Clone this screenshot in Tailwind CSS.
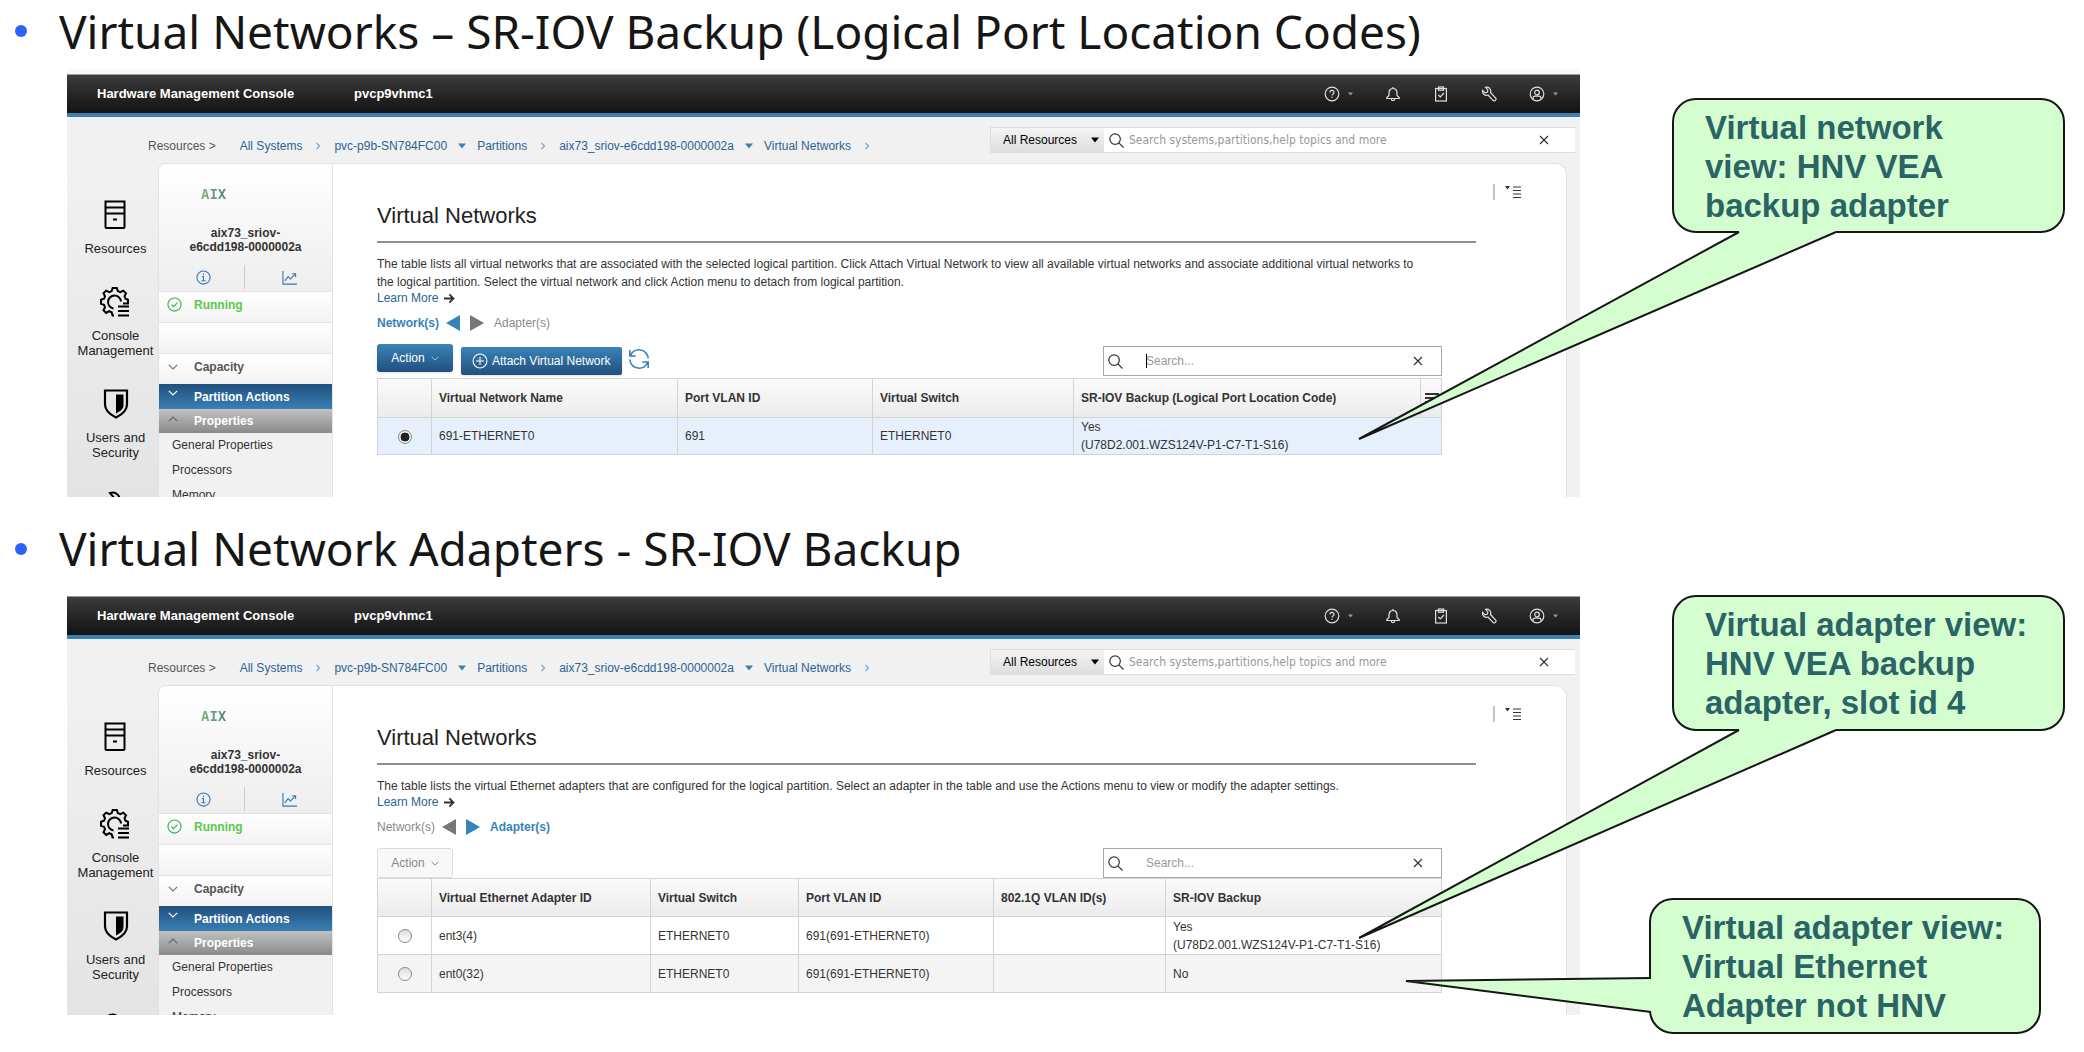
<!DOCTYPE html>
<html lang="en">
<head>
    <meta charset="UTF-8">
    <meta name="viewport" content="width=device-width, initial-scale=1.0">
    <title>Virtual Networks - SR-IOV Backup</title>
    <script src="https://cdn.jsdelivr.net/npm/@tailwindcss/browser@4"></script>
</head>
<body class="bg-white overflow-x-hidden font-['Liberation_Sans',Arial,sans-serif] text-[12px] leading-[18px] text-[#333333]">

    <!-- Icon sprite -->
    <svg class="hidden" xmlns="http://www.w3.org/2000/svg">
        <symbol id="i-help" viewBox="0 0 16 16" fill="none" stroke="currentColor" stroke-width="1.2"><circle cx="8" cy="8" r="6.8"/><path d="M6 6.4a2 2 0 1 1 3 1.7c-.7.4-1 .8-1 1.5"/><path d="M8 10.8v1.3"/></symbol>
        <symbol id="i-bell" viewBox="0 0 16 16" fill="none" stroke="currentColor" stroke-width="1.2"><path d="M8 1v1.5M8 2.5c-2.6 0-4 1.9-4 4.2v2.8L1.8 11.600v.9h12.400v-.9L12 9.500V6.700C12 4.400 10.600 2.500 8 2.500zM6.200 12.800a1.800 1.800 0 0 0 3.600 0"/></symbol>
        <symbol id="i-clip" viewBox="0 0 16 16" fill="none" stroke="currentColor" stroke-width="1.2"><rect x="2.600" y="2.500" width="10.800" height="12.500"/><rect x="5.500" y="1" width="5" height="3.200"/><path d="M5.300 9l2 2 3.600-4"/></symbol>
        <symbol id="i-wrench" viewBox="0 0 16 16" fill="none" stroke="currentColor" stroke-width="1.2"><path d="M4.500 1.300a4 4 0 0 1 5 5.200l5 5.400a1.600 1.600 0 0 1-2.500 2.400L7 9a4 4 0 0 1-5.400-4.700l2.500 2.500 2.300-.7.500-2.200z"/></symbol>
        <symbol id="i-user" viewBox="0 0 16 16" fill="none" stroke="currentColor" stroke-width="1.2"><circle cx="8" cy="8" r="6.800"/><circle cx="8" cy="6.500" r="2.300"/><path d="M4 13.200v-1c0-1.200.8-2 2-2h4c1.200 0 2 .8 2 2v1"/></symbol>
        <symbol id="i-down" viewBox="0 0 8 6"><path d="M0 .5h8L4 5.500z" fill="currentColor"/></symbol>
        <symbol id="i-right" viewBox="0 0 6 8" fill="none" stroke="currentColor" stroke-width="1.2"><path d="M1.500.8L4.500 4l-3 3.200"/></symbol>
        <symbol id="i-chev" viewBox="0 0 10 6" fill="none" stroke="currentColor" stroke-width="1.2"><path d="M.8.8L5 5 9.200.8"/></symbol>
        <symbol id="i-search" viewBox="0 0 16 16" fill="none" stroke="currentColor" stroke-width="1.3"><circle cx="6.500" cy="6.500" r="5.600"/><path d="M10.500 10.500l5 5"/></symbol>
        <symbol id="i-close" viewBox="0 0 10 10" fill="none" stroke="currentColor" stroke-width="1.200"><path d="M1 1l8 8M9 1L1 9"/></symbol>
        <symbol id="i-server" viewBox="0 0 32 32" fill="none" stroke="currentColor" stroke-width="2"><path d="M6.500 2.500h19v25.500a1 1 0 0 1-1 1h-17a1 1 0 0 1-1-1zM6.500 8.500h19M6.500 14.500h19M14 20.500h4"/></symbol>
        <symbol id="i-gear" viewBox="0 0 32 32" fill="none" stroke="currentColor" stroke-width="2"><path d="M14 29.500h-1.500l-.8-3.300-2.500-1-3 1.700-2.700-2.700 1.500-3-1-2.400-3-1v-4l3-1 1-2.500-1.500-3 2.700-2.700 3 1.500 2.500-1 1-3.100h4.100l1 3.100 2.500 1 3-1.500 2.700 2.700-1.500 3 1 2.500 2.500 1v3.700h-5"/><path d="M13.500 22.500a6.500 6.500 0 1 1 7.500-7M18 20.500h11M18 25h11M18 29.500h11"/></symbol>
        <symbol id="i-shield" viewBox="0 0 32 32"><path d="M5 2.500h22v14c0 6-4 9.500-11 13-7-3.500-11-7-11-13z" fill="none" stroke="currentColor" stroke-width="2.200"/><path d="M16 6.500h7.500V17c0 3.500-2.500 6-7.500 8.500z" fill="currentColor"/></symbol>
        <symbol id="i-tool" viewBox="0 0 32 32" fill="none" stroke="currentColor" stroke-width="2"><path d="M10 3c6-2 11 3 9 9l9 9a4 4 0 0 1-6 6l-9-9c-5 2-10-2-9-7l5 4 5-2 1-4z"/></symbol>
        <symbol id="i-info" viewBox="0 0 16 16" fill="none" stroke="currentColor" stroke-width="1.200"><circle cx="8" cy="8" r="7"/><path d="M6.300 7H8v4.500M5.800 11.500h4.400M8 3.800v1.500"/></symbol>
        <symbol id="i-chart" viewBox="0 0 16 16" fill="none" stroke="currentColor" stroke-width="1.200"><path d="M1 1v14h15M3 11.500l3.500-4.500L9 9.500l5-5M10.800 4H14.500v3.500"/></symbol>
        <symbol id="i-ok" viewBox="0 0 16 16" fill="none" stroke="currentColor" stroke-width="1.200"><circle cx="8" cy="8" r="7"/><path d="M4.800 8.200l2.200 2.200 4.200-4.300"/></symbol>
        <symbol id="i-arrow" viewBox="0 0 12 12" fill="none" stroke="currentColor" stroke-width="2"><path d="M0 6h10M5.800 1.500L10.300 6l-4.500 4.500"/></symbol>
        <symbol id="i-plus" viewBox="0 0 18 18" fill="none" stroke="currentColor" stroke-width="1.200"><circle cx="9" cy="9" r="7.800"/><path d="M9 4.500v9M4.500 9h9"/></symbol>
        <symbol id="i-refresh" viewBox="0 0 22 22" fill="none" stroke="currentColor" stroke-width="1.600"><path d="M2.500 7.500C4 4 7 1.800 11 1.800c5 0 9 3.800 9.200 8.700M19.500 14.500c-1.500 3.500-4.500 5.700-8.500 5.700-5 0-9-3.800-9.200-8.700M1.800 2v6h6M20.200 20v-6h-6"/></symbol>
        <symbol id="i-left-tri" viewBox="0 0 14 16"><path d="M14 0v16L0 8z" fill="currentColor"/></symbol>
        <symbol id="i-right-tri" viewBox="0 0 14 16"><path d="M0 0v16l14-8z" fill="currentColor"/></symbol>
        <symbol id="i-menu" viewBox="0 0 16 12"><path d="M0 0h5L2.500 3.500z" fill="currentColor"/><path d="M8 1h8M8 4.500h8M8 8h8M8 11.500h8" stroke="currentColor" fill="none"/></symbol>
        <symbol id="i-bars" viewBox="0 0 14 10" stroke="currentColor" stroke-width="2"><path d="M0 1h14M0 5h14M0 9h14"/></symbol>
    </svg>

    <main class="relative pb-9">

        <h2 class="flex items-center h-[69px] pb-[7px] pl-[15px] font-['Noto_Sans',sans-serif] text-[46px] leading-[54px] text-[#161616] whitespace-nowrap">
            <span class="size-3 mr-8 rounded-full bg-[#2962ff]"></span>Virtual Networks – SR-IOV Backup (Logical Port Location Codes)
        </h2>

        <!-- Console, networks view -->
        <section class="flex flex-col h-[428px] ml-[67px] mr-[504px] overflow-hidden bg-[#f1f1f1]">
            <div class="h-[5px] shrink-0 bg-[#f8f8f8]"></div>
            <header class="flex items-center h-[43px] shrink-0 pl-[30px] pr-[22px] pb-px border-t border-t-[#9a9a9a] border-b-4 border-b-[#3a80b4] bg-linear-to-b from-[#3c3c3c] to-[#131313] text-[13px] text-white font-bold">
                <span class="w-[257px]">Hardware Management Console</span>
                <span>pvcp9vhmc1</span>
                <div class="flex items-center ml-auto text-[#e0e0e0]">
                    <button aria-label="Help" class="flex items-center gap-2"><svg class="size-4"><use href="#i-help"/></svg><svg class="w-[5px] h-1 text-[#999999]"><use href="#i-down"/></svg></button>
                    <button aria-label="Notifications" class="ml-8"><svg class="size-4"><use href="#i-bell"/></svg></button>
                    <button aria-label="Tasks" class="ml-8"><svg class="size-4"><use href="#i-clip"/></svg></button>
                    <button aria-label="Service" class="ml-8"><svg class="size-4"><use href="#i-wrench"/></svg></button>
                    <button aria-label="User" class="flex items-center gap-2 ml-8"><svg class="size-4"><use href="#i-user"/></svg><svg class="w-[5px] h-1 text-[#999999]"><use href="#i-down"/></svg></button>
                </div>
            </header>

            <div class="flex items-start justify-between h-[46px] shrink-0 pl-[81px] pr-[5px]">
                <nav class="flex items-center pt-5 text-[#2a6496] whitespace-nowrap">
                    <span class="mr-6 text-[#555555]">Resources &gt;</span>
                    <a href="#">All Systems</a>
                    <svg class="w-[6px] h-2 mx-[13px] text-[#6fa3cc]"><use href="#i-right"/></svg>
                    <a href="#">pvc-p9b-SN784FC00</a>
                    <svg class="w-2 h-[6px] mx-[11px] text-[#3a80b4]"><use href="#i-down"/></svg>
                    <a href="#">Partitions</a>
                    <svg class="w-[6px] h-2 mx-[13px] text-[#6fa3cc]"><use href="#i-right"/></svg>
                    <a href="#">aix73_sriov-e6cdd198-0000002a</a>
                    <svg class="w-2 h-[6px] mx-[11px] text-[#3a80b4]"><use href="#i-down"/></svg>
                    <a href="#">Virtual Networks</a>
                    <svg class="w-[6px] h-2 mx-[13px] text-[#6fa3cc]"><use href="#i-right"/></svg>
                </nav>
                <div class="flex w-[585px] h-[26px] mt-[10px] border-y border-[#dddddd] bg-white">
                    <label class="relative flex w-[114px] items-center border-l border-[#dddddd] bg-linear-to-b from-[#f4f4f4] to-[#dedede]">
                        <select aria-label="Search scope" class="w-full h-full pl-3 appearance-none text-black"><option>All Resources</option></select>
                        <svg class="absolute right-[5px] w-2 h-[6px] text-black"><use href="#i-down"/></svg>
                    </label>
                    <label class="flex flex-1 items-center pl-[5px] pr-[26px]">
                        <svg class="size-[15px] mr-[5px] shrink-0"><use href="#i-search"/></svg>
                        <input type="text" aria-label="Search console" placeholder="Search systems,partitions,help topics and more" class="flex-1 font-['DejaVu_Sans_Condensed','Noto_Sans',sans-serif] placeholder:text-[#999999]">
                        <svg class="size-[10px]"><use href="#i-close"/></svg>
                    </label>
                </div>
            </div>

            <div class="flex flex-1 min-h-0 pr-[13px]">
                <nav class="flex flex-col items-center gap-[30px] w-[91px] shrink-0 pt-9 pl-[6px] bg-linear-to-b from-[#f1f1f1] to-[#e4e4e4] text-[13px] leading-[15px] text-center text-[#222222]">
                    <a href="#" class="flex flex-col items-center gap-[10px]"><svg class="size-8 text-black"><use href="#i-server"/></svg>Resources</a>
                    <a href="#" class="flex flex-col items-center gap-[10px]"><svg class="size-8 text-black"><use href="#i-gear"/></svg>Console Management</a>
                    <a href="#" class="flex flex-col items-center gap-[10px]"><svg class="size-8 text-black"><use href="#i-shield"/></svg><span>Users and<br>Security</span></a>
                    <a href="#" aria-label="Serviceability"><svg class="size-8 text-black"><use href="#i-tool"/></svg></a>
                </nav>

                <aside class="w-[175px] shrink-0 border-t border-x border-[#e2e2e2] rounded-tl-lg bg-[#f1f1f1] overflow-hidden">
                    <div class="h-[127px] pt-[21px] bg-linear-to-b from-white to-[#eeeeee]">
                        <div class="ml-[42px] w-[26px] font-['DejaVu_Sans_Mono',monospace] text-[14px] font-bold text-transparent bg-clip-text bg-linear-to-r from-[#7fb486] to-[#4e8478]">AIX</div>
                        <div class="mt-[23px] text-center leading-[14px] font-bold">aix73_sriov-<br>e6cdd198-0000002a</div>
                        <div class="flex items-center mt-[11px] h-6 pl-[37px] text-[#3a78b0]">
                            <svg class="size-[15px]"><use href="#i-info"/></svg>
                            <span class="h-full mx-[33px] border-l border-[#cccccc]"></span>
                            <svg class="size-[15px] ml-1"><use href="#i-chart"/></svg>
                        </div>
                    </div>
                    <div class="flex items-center h-[31px] px-2 pb-[5px] border-t border-[#e4e4e4] bg-linear-to-b from-white to-[#f3f3f3] font-bold text-[#5bc94b]"><svg class="size-[15px] mr-3 text-[#3fae4f]"><use href="#i-ok"/></svg>Running</div>
                    <div class="h-[31px] border-t border-[#e4e4e4] bg-linear-to-b from-white to-[#f3f3f3]"></div>
                    <div class="flex items-center h-[31px] px-[9px] pb-[5px] border-t border-[#e4e4e4] bg-linear-to-b from-white to-[#f3f3f3] font-bold text-[#555555]"><svg class="w-[10px] h-[6px] mr-4 text-[#777777]"><use href="#i-chev"/></svg>Capacity</div>
                    <div class="flex items-center h-[25px] px-[9px] bg-linear-to-b from-[#21507e] to-[#3a80b4] font-bold text-white"><svg class="w-[10px] h-[6px] mr-4 mb-2"><use href="#i-chev"/></svg>Partition Actions</div>
                    <div class="flex items-center h-6 px-[9px] bg-linear-to-b from-[#c2c2c2] to-[#8a8a8a] font-bold text-white"><svg class="w-[10px] h-[6px] mr-4 mb-1 rotate-180 text-[#666666]"><use href="#i-chev"/></svg>Properties</div>
                    <ul class="pl-[13px] leading-[25px]">
                        <li><a href="#">General Properties</a></li>
                        <li><a href="#">Processors</a></li>
                        <li><a href="#">Memory</a></li>
                    </ul>
                </aside>

                <div class="relative flex-1 pl-[44px] pr-[90px] pt-[39px] border-t border-r border-[#e4e4e4] rounded-tr-xl bg-white">
                    <button aria-label="Page menu" class="absolute top-5 right-[45px] h-4 pl-[10px] border-l-2 border-[#c4c4c4]"><svg class="w-4 h-3"><use href="#i-menu"/></svg></button>
                    <h3 class="pb-[12px] border-b-2 border-[#8f8f8f] text-[22px] leading-[26px] text-[#222222]">Virtual Networks</h3>
                    <div class="pr-[34px]">
                        <p class="mt-3">The table lists all virtual networks that are associated with the selected logical partition. Click Attach Virtual Network to view all available virtual networks and associate additional virtual networks to<br>the logical partition. Select the virtual network and click Action menu to detach from logical partition.</p>
                        <a href="#" class="flex items-center leading-[14px] text-[#2a6496]">Learn More <svg class="size-[11px] ml-[6px] text-[#333333]"><use href="#i-arrow"/></svg></a>
                        <div class="flex items-center mt-[9px] text-[#8a8a8a]">
                            <a href="#" class="font-bold text-[#3584b8]">Network(s)</a>
                            <svg class="w-[14px] h-4 ml-[7px] text-[#3584b8]"><use href="#i-left-tri"/></svg>
                            <svg class="w-[14px] h-4 mx-[10px] text-[#777777]"><use href="#i-right-tri"/></svg>
                            <a href="#">Adapter(s)</a>
                        </div>
                        <div class="flex items-start h-[46px] pt-3">
                            <button class="flex items-center justify-center w-[76px] h-7 gap-[6px] rounded-[3px] bg-linear-to-b from-[#3a85b8] to-[#21507e] text-white shadow">Action <svg class="w-2 h-[5px] text-[#a8cce4]"><use href="#i-chev"/></svg></button>
                            <button class="flex items-center h-7 ml-2 mt-[3px] px-[11px] gap-1 rounded-[2px] bg-linear-to-b from-[#3a85b8] to-[#21507e] text-white shadow"><svg class="size-4"><use href="#i-plus"/></svg>Attach Virtual Network</button>
                            <button aria-label="Refresh" class="ml-[6px] mt-1 text-[#3584b8]"><svg class="size-[22px]"><use href="#i-refresh"/></svg></button>
                            <label class="relative flex items-center w-[339px] h-[30px] ml-auto mt-[2px] pl-1 pr-[18px] border border-[#a8a8a8] bg-white">
                                <svg class="size-[15px] shrink-0"><use href="#i-search"/></svg>
                                <span class="absolute left-[42px] h-[14px] border-l border-black"></span>
                                <input type="text" aria-label="Filter networks" placeholder="Search..." class="flex-1 ml-[23px] placeholder:text-[#999999]">
                                <svg class="size-[10px]"><use href="#i-close"/></svg>
                            </label>
                        </div>
                        <table class="w-full table-fixed border-collapse text-left [&_td]:border [&_td]:border-[#d4d4d4] [&_th]:border [&_th]:border-[#d4d4d4] [&_td]:px-[7px] [&_th]:px-[7px]">
                            <colgroup><col class="w-[54px]"><col class="w-[246px]"><col class="w-[195px]"><col class="w-[201px]"><col><col class="w-[21px]"></colgroup>
                            <thead>
                                <tr class="h-[39px] bg-linear-to-b from-[#fbfbfb] to-[#ebebeb]">
                                    <th></th><th>Virtual Network Name</th><th>Port VLAN ID</th><th>Virtual Switch</th><th>SR-IOV Backup (Logical Port Location Code)</th>
                                    <th class="relative"><svg class="absolute left-1 top-[14px] w-[14px] h-[10px]"><use href="#i-bars"/></svg></th>
                                </tr>
                            </thead>
                            <tbody>
                                <tr class="h-[37px] bg-[#e6f0fd]">
                                    <td class="text-center"><input type="radio" name="network" aria-label="Select 691-ETHERNET0" checked class="appearance-none align-middle size-[14px] rounded-full border border-[#888888] bg-radial from-[#222222] from-50% to-[#eeeeee] to-55%"></td>
                                    <td>691-ETHERNET0</td><td>691</td><td>ETHERNET0</td><td colspan="2">Yes<br>(U78D2.001.WZS124V-P1-C7-T1-S16)</td>
                                </tr>
                            </tbody>
                        </table>
                    </div>
                </div>
            </div>
        </section>

        <h2 class="flex items-end h-[99px] pb-[21px] pl-[15px] font-['Noto_Sans',sans-serif] text-[46px] leading-[54px] text-[#161616] whitespace-nowrap">
            <span class="size-3 mr-8 mb-5 rounded-full bg-[#2962ff]"></span>Virtual Network Adapters - SR-IOV Backup
        </h2>

        <!-- Console, adapters view -->
        <section class="flex flex-col h-[419px] ml-[67px] mr-[504px] overflow-hidden bg-[#f1f1f1]">
            <header class="flex items-center h-[43px] shrink-0 pl-[30px] pr-[22px] pb-px border-t border-t-[#9a9a9a] border-b-4 border-b-[#3a80b4] bg-linear-to-b from-[#3c3c3c] to-[#131313] text-[13px] text-white font-bold">
                <span class="w-[257px]">Hardware Management Console</span>
                <span>pvcp9vhmc1</span>
                <div class="flex items-center ml-auto text-[#e0e0e0]">
                    <button aria-label="Help" class="flex items-center gap-2"><svg class="size-4"><use href="#i-help"/></svg><svg class="w-[5px] h-1 text-[#999999]"><use href="#i-down"/></svg></button>
                    <button aria-label="Notifications" class="ml-8"><svg class="size-4"><use href="#i-bell"/></svg></button>
                    <button aria-label="Tasks" class="ml-8"><svg class="size-4"><use href="#i-clip"/></svg></button>
                    <button aria-label="Service" class="ml-8"><svg class="size-4"><use href="#i-wrench"/></svg></button>
                    <button aria-label="User" class="flex items-center gap-2 ml-8"><svg class="size-4"><use href="#i-user"/></svg><svg class="w-[5px] h-1 text-[#999999]"><use href="#i-down"/></svg></button>
                </div>
            </header>

            <div class="flex items-start justify-between h-[46px] shrink-0 pl-[81px] pr-[5px]">
                <nav class="flex items-center pt-5 text-[#2a6496] whitespace-nowrap">
                    <span class="mr-6 text-[#555555]">Resources &gt;</span>
                    <a href="#">All Systems</a>
                    <svg class="w-[6px] h-2 mx-[13px] text-[#6fa3cc]"><use href="#i-right"/></svg>
                    <a href="#">pvc-p9b-SN784FC00</a>
                    <svg class="w-2 h-[6px] mx-[11px] text-[#3a80b4]"><use href="#i-down"/></svg>
                    <a href="#">Partitions</a>
                    <svg class="w-[6px] h-2 mx-[13px] text-[#6fa3cc]"><use href="#i-right"/></svg>
                    <a href="#">aix73_sriov-e6cdd198-0000002a</a>
                    <svg class="w-2 h-[6px] mx-[11px] text-[#3a80b4]"><use href="#i-down"/></svg>
                    <a href="#">Virtual Networks</a>
                    <svg class="w-[6px] h-2 mx-[13px] text-[#6fa3cc]"><use href="#i-right"/></svg>
                </nav>
                <div class="flex w-[585px] h-[26px] mt-[10px] border-y border-[#dddddd] bg-white">
                    <label class="relative flex w-[114px] items-center border-l border-[#dddddd] bg-linear-to-b from-[#f4f4f4] to-[#dedede]">
                        <select aria-label="Search scope" class="w-full h-full pl-3 appearance-none text-black"><option>All Resources</option></select>
                        <svg class="absolute right-[5px] w-2 h-[6px] text-black"><use href="#i-down"/></svg>
                    </label>
                    <label class="flex flex-1 items-center pl-[5px] pr-[26px]">
                        <svg class="size-[15px] mr-[5px] shrink-0"><use href="#i-search"/></svg>
                        <input type="text" aria-label="Search console" placeholder="Search systems,partitions,help topics and more" class="flex-1 font-['DejaVu_Sans_Condensed','Noto_Sans',sans-serif] placeholder:text-[#999999]">
                        <svg class="size-[10px]"><use href="#i-close"/></svg>
                    </label>
                </div>
            </div>

            <div class="flex flex-1 min-h-0 pr-[13px]">
                <nav class="flex flex-col items-center gap-[30px] w-[91px] shrink-0 pt-9 pl-[6px] bg-linear-to-b from-[#f1f1f1] to-[#e4e4e4] text-[13px] leading-[15px] text-center text-[#222222]">
                    <a href="#" class="flex flex-col items-center gap-[10px]"><svg class="size-8 text-black"><use href="#i-server"/></svg>Resources</a>
                    <a href="#" class="flex flex-col items-center gap-[10px]"><svg class="size-8 text-black"><use href="#i-gear"/></svg>Console Management</a>
                    <a href="#" class="flex flex-col items-center gap-[10px]"><svg class="size-8 text-black"><use href="#i-shield"/></svg><span>Users and<br>Security</span></a>
                    <a href="#" aria-label="Serviceability"><svg class="size-8 text-black"><use href="#i-tool"/></svg></a>
                </nav>

                <aside class="w-[175px] shrink-0 border-t border-x border-[#e2e2e2] rounded-tl-lg bg-[#f1f1f1] overflow-hidden">
                    <div class="h-[127px] pt-[21px] bg-linear-to-b from-white to-[#eeeeee]">
                        <div class="ml-[42px] w-[26px] font-['DejaVu_Sans_Mono',monospace] text-[14px] font-bold text-transparent bg-clip-text bg-linear-to-r from-[#7fb486] to-[#4e8478]">AIX</div>
                        <div class="mt-[23px] text-center leading-[14px] font-bold">aix73_sriov-<br>e6cdd198-0000002a</div>
                        <div class="flex items-center mt-[11px] h-6 pl-[37px] text-[#3a78b0]">
                            <svg class="size-[15px]"><use href="#i-info"/></svg>
                            <span class="h-full mx-[33px] border-l border-[#cccccc]"></span>
                            <svg class="size-[15px] ml-1"><use href="#i-chart"/></svg>
                        </div>
                    </div>
                    <div class="flex items-center h-[31px] px-2 pb-[5px] border-t border-[#e4e4e4] bg-linear-to-b from-white to-[#f3f3f3] font-bold text-[#5bc94b]"><svg class="size-[15px] mr-3 text-[#3fae4f]"><use href="#i-ok"/></svg>Running</div>
                    <div class="h-[31px] border-t border-[#e4e4e4] bg-linear-to-b from-white to-[#f3f3f3]"></div>
                    <div class="flex items-center h-[31px] px-[9px] pb-[5px] border-t border-[#e4e4e4] bg-linear-to-b from-white to-[#f3f3f3] font-bold text-[#555555]"><svg class="w-[10px] h-[6px] mr-4 text-[#777777]"><use href="#i-chev"/></svg>Capacity</div>
                    <div class="flex items-center h-[25px] px-[9px] bg-linear-to-b from-[#21507e] to-[#3a80b4] font-bold text-white"><svg class="w-[10px] h-[6px] mr-4 mb-2"><use href="#i-chev"/></svg>Partition Actions</div>
                    <div class="flex items-center h-6 px-[9px] bg-linear-to-b from-[#c2c2c2] to-[#8a8a8a] font-bold text-white"><svg class="w-[10px] h-[6px] mr-4 mb-1 rotate-180 text-[#666666]"><use href="#i-chev"/></svg>Properties</div>
                    <ul class="pl-[13px] leading-[25px]">
                        <li><a href="#">General Properties</a></li>
                        <li><a href="#">Processors</a></li>
                        <li><a href="#">Memory</a></li>
                    </ul>
                </aside>

                <div class="relative flex-1 pl-[44px] pr-[90px] pt-[39px] border-t border-r border-[#e4e4e4] rounded-tr-xl bg-white">
                    <button aria-label="Page menu" class="absolute top-5 right-[45px] h-4 pl-[10px] border-l-2 border-[#c4c4c4]"><svg class="w-4 h-3"><use href="#i-menu"/></svg></button>
                    <h3 class="pb-[12px] border-b-2 border-[#8f8f8f] text-[22px] leading-[26px] text-[#222222]">Virtual Networks</h3>
                    <div class="pr-[34px]">
                        <p class="mt-3">The table lists the virtual Ethernet adapters that are configured for the logical partition. Select an adapter in the table and use the Actions menu to view or modify the adapter settings.</p>
                        <a href="#" class="flex items-center leading-[14px] text-[#2a6496]">Learn More <svg class="size-[11px] ml-[6px] text-[#333333]"><use href="#i-arrow"/></svg></a>
                        <div class="flex items-center mt-[9px] text-[#8a8a8a]">
                            <a href="#">Network(s)</a>
                            <svg class="w-[14px] h-4 ml-[7px] text-[#777777]"><use href="#i-left-tri"/></svg>
                            <svg class="w-[14px] h-4 mx-[10px] text-[#3584b8]"><use href="#i-right-tri"/></svg>
                            <a href="#" class="font-bold text-[#3584b8]">Adapter(s)</a>
                        </div>
                        <div class="flex items-start h-[42px] pt-3">
                            <button disabled class="flex items-center justify-center w-[76px] h-[30px] gap-[6px] rounded-[3px] border border-[#dcdcdc] bg-[#f8f8f8] text-[#8a8a8a]">Action <svg class="w-2 h-[5px]"><use href="#i-chev"/></svg></button>
                            <label class="flex items-center w-[339px] h-[30px] ml-auto pl-1 pr-[18px] border border-[#a8a8a8] bg-white">
                                <svg class="size-[15px] shrink-0"><use href="#i-search"/></svg>
                                <input type="text" aria-label="Filter adapters" placeholder="Search..." class="flex-1 ml-[23px] placeholder:text-[#999999]">
                                <svg class="size-[10px]"><use href="#i-close"/></svg>
                            </label>
                        </div>
                        <table class="w-full table-fixed border-collapse text-left [&_td]:border [&_td]:border-[#d4d4d4] [&_th]:border [&_th]:border-[#d4d4d4] [&_td]:px-[7px] [&_th]:px-[7px]">
                            <colgroup><col class="w-[54px]"><col class="w-[219px]"><col class="w-[148px]"><col class="w-[195px]"><col class="w-[172px]"><col></colgroup>
                            <thead>
                                <tr class="h-[38px] bg-linear-to-b from-[#fbfbfb] to-[#ebebeb]">
                                    <th></th><th>Virtual Ethernet Adapter ID</th><th>Virtual Switch</th><th>Port VLAN ID</th><th>802.1Q VLAN ID(s)</th><th>SR-IOV Backup</th>
                                </tr>
                            </thead>
                            <tbody>
                                <tr class="h-[38px]">
                                    <td class="text-center"><input type="radio" name="adapter" aria-label="Select ent3(4)" class="appearance-none align-middle size-[14px] rounded-full border border-[#888888] bg-linear-to-b from-[#dddddd] to-white"></td>
                                    <td>ent3(4)</td><td>ETHERNET0</td><td>691(691-ETHERNET0)</td><td></td><td>Yes<br>(U78D2.001.WZS124V-P1-C7-T1-S16)</td>
                                </tr>
                                <tr class="h-[38px] bg-[#f4f4f4]">
                                    <td class="text-center"><input type="radio" name="adapter" aria-label="Select ent0(32)" class="appearance-none align-middle size-[14px] rounded-full border border-[#888888] bg-linear-to-b from-[#dddddd] to-white"></td>
                                    <td>ent0(32)</td><td>ETHERNET0</td><td>691(691-ETHERNET0)</td><td></td><td>No</td>
                                </tr>
                            </tbody>
                        </table>
                    </div>
                </div>
            </div>
        </section>

        <!-- Callouts, each a bubble with a pointer into the tables -->
        <div class="absolute top-[98px] right-[19px] w-[393px] h-[135px] pt-2 pl-[31px] rounded-3xl border-2 border-[#161616] bg-[#d5fed0] text-[33px] leading-[39px] font-bold text-[#2a6465]">
            <svg class="absolute left-[-316px] top-[129px] w-[484px] h-[212px]" viewBox="0 0 484 212"><path d="M381 0v3L1 210 478 3V0z" fill="#d5fed0"/><path d="M381 3L1 210 478 3" fill="none" stroke="#161616" stroke-width="2"/></svg>
            <p class="relative">Virtual network<br>view: HNV VEA<br>backup adapter</p>
        </div>
        <div class="absolute top-[595px] right-[19px] w-[393px] h-[136px] pt-2 pl-[31px] rounded-3xl border-2 border-[#161616] bg-[#d5fed0] text-[33px] leading-[39px] font-bold text-[#2a6465]">
            <svg class="absolute left-[-316px] top-[130px] w-[484px] h-[212px]" viewBox="0 0 484 212"><path d="M381 0v3L1 211 478 3V0z" fill="#d5fed0"/><path d="M381 3L1 211 478 3" fill="none" stroke="#161616" stroke-width="2"/></svg>
            <p class="relative">Virtual adapter view:<br>HNV VEA backup<br>adapter, slot id 4</p>
        </div>
        <div class="absolute top-[898px] right-[43px] w-[392px] h-[136px] pt-2 pl-[31px] rounded-3xl border-2 border-[#161616] bg-[#d5fed0] text-[33px] leading-[39px] font-bold text-[#2a6465]">
            <svg class="absolute left-[-246px] top-[74px] w-[248px] h-[42px]" viewBox="0 0 248 42"><path d="M248 4h-3L1 7l244 31h3z" fill="#d5fed0"/><path d="M246 4L1 7l245 31" fill="none" stroke="#161616" stroke-width="2"/></svg>
            <p class="relative">Virtual adapter view:<br>Virtual Ethernet<br>Adapter not HNV</p>
        </div>
    </main>
</body>
</html>
